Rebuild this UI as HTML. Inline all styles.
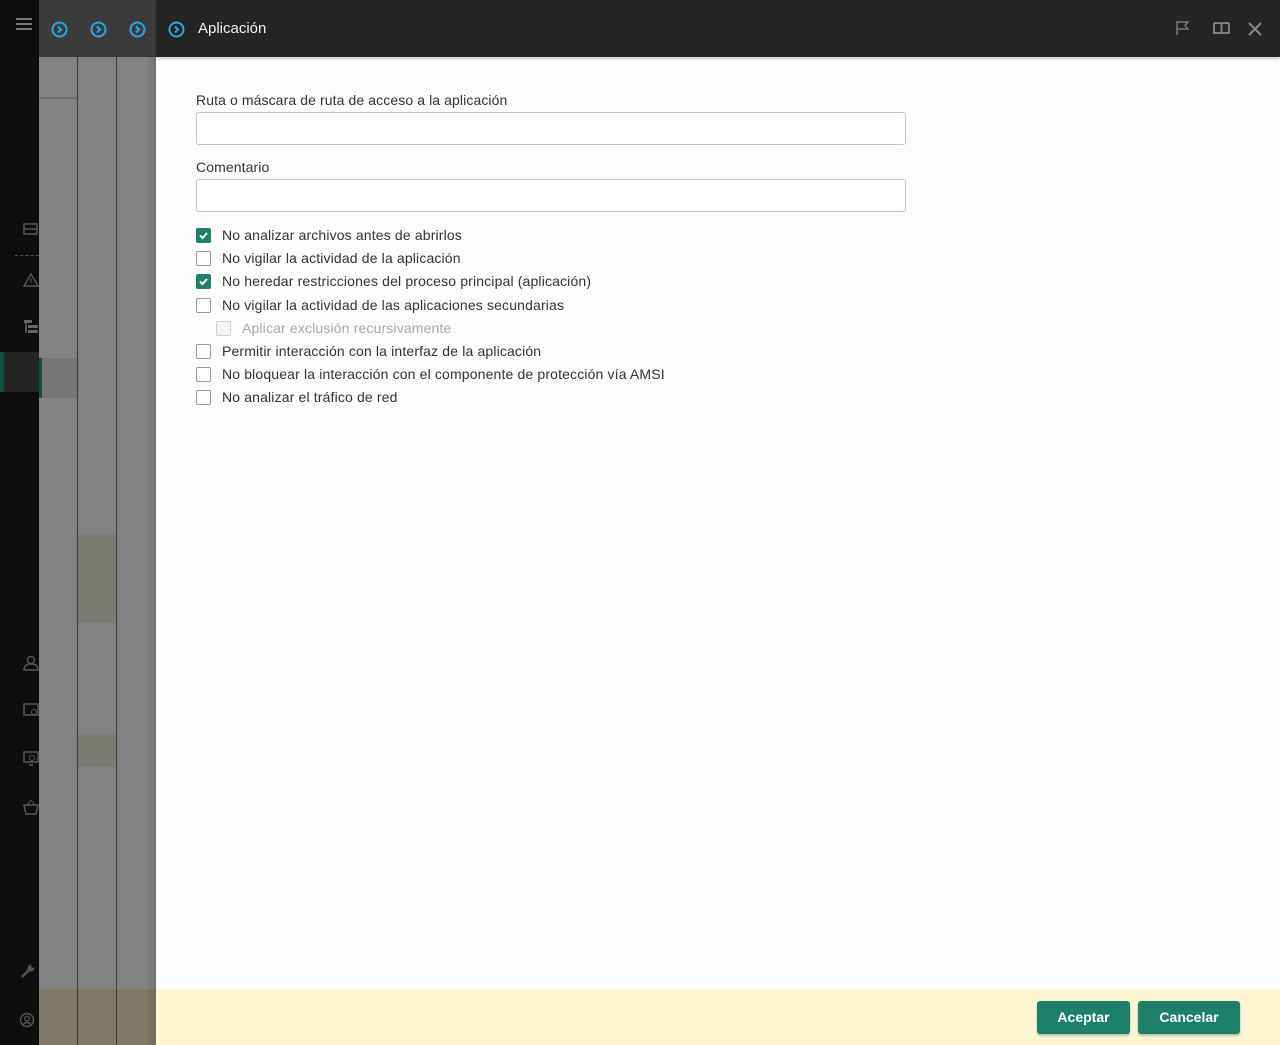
<!DOCTYPE html>
<html><head><meta charset="utf-8"><style>
*{box-sizing:border-box;margin:0;padding:0}
body{width:1280px;height:1045px;overflow:hidden;position:relative;background:#fcfcfc;font-family:"Liberation Sans",sans-serif;}
.abs{position:absolute}
.side{left:0;top:0;width:39px;height:1045px;background:#0e0e0e}
.col{top:57px;height:988px;background:#828282}
.hcol{top:0;height:57px;background:#3c3c3c}
.sep{top:0;width:1px;height:1045px;background:#3a3a3a}
.chev{width:17px;height:17px}
.lbl{font-size:14px;color:#333;letter-spacing:0.1px}
.inp{left:196px;width:710px;height:33px;border:1px solid #c4c4c4;border-radius:3px;background:#fff}
.cb{left:196px;width:15px;height:15px;border:1px solid #9a9a9a;border-radius:2px;background:#fff}
.cb.on{background:#1f7f6a;border-color:#1f7f6a}
.cb.dis{left:216px;border-color:#cfcfcf;background:#f3f3f3}
.ct{left:222px;font-size:14px;color:#333;letter-spacing:0.15px;line-height:16px}
.btn{top:1001px;height:33px;background:#1f8069;color:#fff;border-radius:3px;font-size:14px;font-weight:bold;text-align:center;line-height:33px;box-shadow:0 2px 2px rgba(0,0,0,.25)}
</style></head><body>
<div class="abs side"></div>
<svg class="abs" style="left:15px;top:17px" width="18" height="14"><g stroke="#777" stroke-width="2"><line x1="1" y1="2" x2="17" y2="2"/><line x1="1" y1="7" x2="17" y2="7"/><line x1="1" y1="12" x2="17" y2="12"/></g></svg>
<svg class="abs" style="left:23px;top:222px" width="16" height="16"><rect x="1" y="2" width="13" height="10" fill="none" stroke="#555" stroke-width="1.5"/><line x1="1" y1="7" x2="14" y2="7" stroke="#555" stroke-width="1.5"/></svg>
<div class="abs" style="left:15px;top:255px;width:24px;border-top:1px dashed #555"></div>
<svg class="abs" style="left:23px;top:272px" width="16" height="16"><path d="M8 2 L15 14 L1 14 Z" fill="none" stroke="#555" stroke-width="1.5"/><line x1="8" y1="6" x2="8" y2="11" stroke="#555"/></svg>
<svg class="abs" style="left:23px;top:319px" width="16" height="16"><rect x="1" y="1" width="8" height="3" fill="#666"/><line x1="3" y1="4" x2="3" y2="14" stroke="#666" stroke-width="1.5"/><rect x="5" y="6" width="10" height="3" fill="#666"/><rect x="5" y="11" width="10" height="3" fill="#666"/></svg>
<div class="abs" style="left:0;top:352px;width:39px;height:40px;background:#242424"></div>
<div class="abs" style="left:0;top:352px;width:4px;height:40px;background:#0f4f42"></div>
<svg class="abs" style="left:23px;top:655px" width="16" height="16"><circle cx="8" cy="5" r="3.5" fill="none" stroke="#555" stroke-width="1.5"/><path d="M1 15 Q1 9 8 9 Q15 9 15 15 Z" fill="none" stroke="#555" stroke-width="1.5"/></svg>
<svg class="abs" style="left:23px;top:703px" width="16" height="16"><rect x="1" y="1" width="14" height="11" fill="none" stroke="#555" stroke-width="1.5"/><circle cx="11" cy="9" r="2.5" fill="none" stroke="#555"/></svg>
<svg class="abs" style="left:23px;top:751px" width="16" height="16"><rect x="1" y="1" width="14" height="10" fill="none" stroke="#555" stroke-width="1.5"/><circle cx="9" cy="7" r="2.5" fill="none" stroke="#555"/><line x1="6" y1="14" x2="10" y2="14" stroke="#555" stroke-width="1.5"/></svg>
<svg class="abs" style="left:23px;top:799px" width="16" height="16"><path d="M1 6 L15 6 L13 15 L3 15 Z" fill="none" stroke="#555" stroke-width="1.5"/><path d="M4 6 L8 1 L12 6" fill="none" stroke="#555"/></svg>
<svg class="abs" style="left:20px;top:963px" width="16" height="16"><path d="M2 14 L9 7" stroke="#555" stroke-width="2.5"/><circle cx="11" cy="5" r="3.5" fill="#555"/><circle cx="13" cy="3" r="1.8" fill="#0e0e0e"/></svg>
<svg class="abs" style="left:19px;top:1012px" width="16" height="16"><circle cx="8" cy="8" r="6.5" fill="none" stroke="#555" stroke-width="1.5"/><circle cx="8" cy="6.5" r="2.3" fill="none" stroke="#555" stroke-width="1.3"/><path d="M4 12.5 Q8 8.5 12 12.5" fill="none" stroke="#555" stroke-width="1.3"/></svg>

<div class="abs col" style="left:39px;width:117px"></div>
<div class="abs" style="left:39px;top:97px;width:38px;height:2px;background:#6e6e6e"></div>
<div class="abs" style="left:39px;top:358px;width:38px;height:40px;background:#777"></div>
<div class="abs" style="left:39px;top:358px;width:3px;height:40px;background:#0f4f42"></div>
<div class="abs" style="left:78px;top:534px;width:38px;height:89px;background:#7b7b74"></div>
<div class="abs" style="left:78px;top:734px;width:38px;height:33px;background:#7b7b74"></div>
<div class="abs" style="left:39px;top:989px;width:117px;height:56px;background:#7f7a66"></div>
<div class="abs" style="left:146px;top:57px;width:10px;height:988px;background:linear-gradient(to right,rgba(0,0,0,0),rgba(0,0,0,.12))"></div>
<div class="abs hcol" style="left:39px;width:117px"></div>
<div class="abs sep" style="left:77px"></div>
<div class="abs sep" style="left:116px"></div>
<div class="abs" style="left:156px;top:0;width:1124px;height:57px;background:#242424;box-shadow:0 2px 3px rgba(0,0,0,.2)"></div>
<svg class="abs chev" style="left:51px;top:21px"><circle cx="8.5" cy="8.5" r="7" fill="none" stroke="#2aa6e6" stroke-width="2"/><path d="M7 5.5 L10 8.5 L7 11.5" fill="none" stroke="#2aa6e6" stroke-width="2"/></svg>
<svg class="abs chev" style="left:90px;top:21px"><circle cx="8.5" cy="8.5" r="7" fill="none" stroke="#2aa6e6" stroke-width="2"/><path d="M7 5.5 L10 8.5 L7 11.5" fill="none" stroke="#2aa6e6" stroke-width="2"/></svg>
<svg class="abs chev" style="left:129px;top:21px"><circle cx="8.5" cy="8.5" r="7" fill="none" stroke="#2aa6e6" stroke-width="2"/><path d="M7 5.5 L10 8.5 L7 11.5" fill="none" stroke="#2aa6e6" stroke-width="2"/></svg>
<svg class="abs chev" style="left:168px;top:21px"><circle cx="8.5" cy="8.5" r="7" fill="none" stroke="#2aa6e6" stroke-width="2"/><path d="M7 5.5 L10 8.5 L7 11.5" fill="none" stroke="#2aa6e6" stroke-width="2"/></svg>
<div class="abs" style="left:198px;top:20px;font-size:15px;color:#f0f0f0">Aplicación</div>
<svg class="abs" style="left:1175px;top:20px" width="16" height="16"><path d="M2 15 L2 2 L13 2 L10 5.5 L13 9 L2 9" fill="none" stroke="#777" stroke-width="1.5"/></svg>
<svg class="abs" style="left:1213px;top:21px" width="17" height="14"><path d="M1 2 L7 2 Q8.5 2 8.5 4 L8.5 13 M16 2 L10 2 Q8.5 2 8.5 4 M1 2 L1 12 L16 12 L16 2" fill="none" stroke="#888" stroke-width="1.8"/></svg>
<svg class="abs" style="left:1248px;top:22px" width="14" height="14"><path d="M1 1 L13 13 M13 1 L1 13" stroke="#888" stroke-width="2"/></svg>

<div class="abs lbl" style="left:196px;top:92px">Ruta o máscara de ruta de acceso a la aplicación</div>
<div class="abs inp" style="top:112px"></div>
<div class="abs lbl" style="left:196px;top:159px">Comentario</div>
<div class="abs inp" style="top:179px"></div>

<div class="abs cb on" style="top:228px"><svg width="13" height="13" style="position:absolute;left:0;top:0"><path d="M3 6.5 L5.5 9 L10 4" fill="none" stroke="#fff" stroke-width="2"/></svg></div>
<div class="abs ct" style="top:227px">No analizar archivos antes de abrirlos</div>
<div class="abs cb" style="top:251px"></div>
<div class="abs ct" style="top:250px">No vigilar la actividad de la aplicación</div>
<div class="abs cb on" style="top:274px"><svg width="13" height="13" style="position:absolute;left:0;top:0"><path d="M3 6.5 L5.5 9 L10 4" fill="none" stroke="#fff" stroke-width="2"/></svg></div>
<div class="abs ct" style="top:273px">No heredar restricciones del proceso principal (aplicación)</div>
<div class="abs cb" style="top:298px"></div>
<div class="abs ct" style="top:297px">No vigilar la actividad de las aplicaciones secundarias</div>
<div class="abs cb dis" style="top:321px"></div>
<div class="abs ct" style="left:242px;top:320px;color:#a8a8a8">Aplicar exclusión recursivamente</div>
<div class="abs cb" style="top:344px"></div>
<div class="abs ct" style="top:343px">Permitir interacción con la interfaz de la aplicación</div>
<div class="abs cb" style="top:367px"></div>
<div class="abs ct" style="top:366px">No bloquear la interacción con el componente de protección vía AMSI</div>
<div class="abs cb" style="top:390px"></div>
<div class="abs ct" style="top:389px">No analizar el tráfico de red</div>

<div class="abs" style="left:156px;top:989px;width:1124px;height:56px;background:#fff7d4"></div>
<div class="abs btn" style="left:1037px;width:93px">Aceptar</div>
<div class="abs btn" style="left:1138px;width:102px">Cancelar</div>
</body></html>
